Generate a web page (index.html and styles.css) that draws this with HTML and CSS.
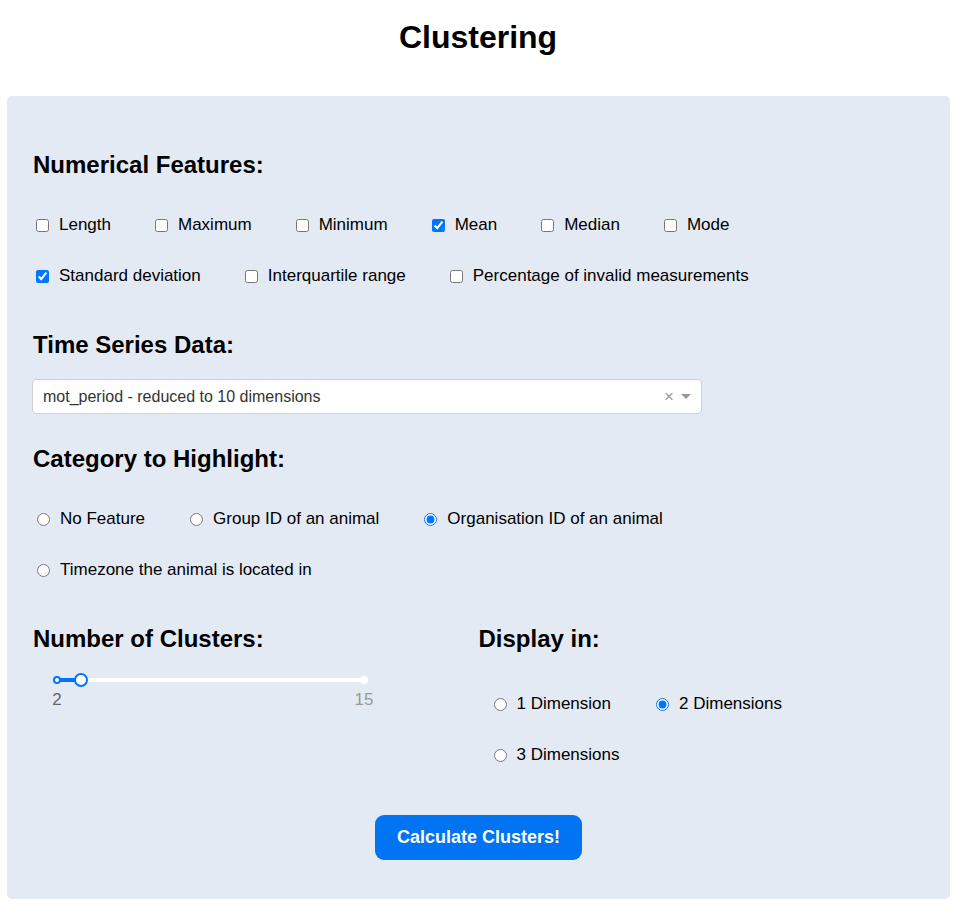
FILE: index.html
```html
<!DOCTYPE html>
<html>
<head>
<meta charset="utf-8">
<title>Clustering</title>
<link rel="stylesheet" href="styles.css">
</head>
<body>
<h1 class="title">Clustering</h1>
<div class="panel">
  <h2 class="heading">Numerical Features:</h2>
  <div class="options checks">
    <label class="opt"><input type="checkbox"><span>Length</span></label>
    <label class="opt"><input type="checkbox"><span>Maximum</span></label>
    <label class="opt"><input type="checkbox"><span>Minimum</span></label>
    <label class="opt"><input type="checkbox" checked><span>Mean</span></label>
    <label class="opt"><input type="checkbox"><span>Median</span></label>
    <label class="opt"><input type="checkbox"><span>Mode</span></label>
    <label class="opt"><input type="checkbox" checked><span>Standard deviation</span></label>
    <label class="opt"><input type="checkbox"><span>Interquartile range</span></label>
    <label class="opt"><input type="checkbox"><span>Percentage of invalid measurements</span></label>
  </div>

  <h2 class="heading sec">Time Series Data:</h2>
  <div class="select">
    <span class="select-value">mot_period - reduced to 10 dimensions</span>
    <span class="select-clear">×</span>
    <span class="select-arrow"></span>
  </div>

  <h2 class="heading sec2">Category to Highlight:</h2>
  <div class="options radios">
    <label class="opt"><input type="radio" name="cat"><span>No Feature</span></label>
    <label class="opt"><input type="radio" name="cat"><span>Group ID of an animal</span></label>
    <label class="opt"><input type="radio" name="cat" checked><span>Organisation ID of an animal</span></label>
    <label class="opt"><input type="radio" name="cat"><span>Timezone the animal is located in</span></label>
  </div>

  <div class="cols">
    <div class="col">
      <h2 class="heading">Number of Clusters:</h2>
      <div class="slider">
        <div class="track">
          <div class="track-active"></div>
          <span class="dot dot-start"></span>
          <span class="dot dot-end"></span>
          <span class="handle"></span>
          <span class="mark mark-active">2</span>
          <span class="mark mark-end">15</span>
        </div>
      </div>
    </div>
    <div class="col">
      <h2 class="heading">Display in:</h2>
      <div class="options radios dims">
        <label class="opt"><input type="radio" name="dim"><span>1 Dimension</span></label>
        <label class="opt"><input type="radio" name="dim" checked><span>2 Dimensions</span></label>
        <label class="opt"><input type="radio" name="dim"><span>3 Dimensions</span></label>
      </div>
    </div>
  </div>

  <div class="actions">
    <button class="btn">Calculate Clusters!</button>
  </div>
</div>
</body>
</html>
```
FILE: styles.css
```css
html, body {
  margin: 0;
  padding: 0;
  background: #ffffff;
  font-family: "Liberation Sans", Arial, sans-serif;
  color: #000;
}

.title {
  margin: 19px 0 0;
  font-size: 32px;
  line-height: 37px;
  font-weight: bold;
  text-align: center;
}

.panel {
  margin: 40px 6px 0 7px;
  padding: 55px 26px 39px;
  background: #e4eaf4;
  border-radius: 5px;
  height: 803px;
  box-sizing: border-box;
}

.heading {
  margin: 0;
  font-size: 24px;
  line-height: 28px;
  font-weight: bold;
}

.sec { margin-top: 45px; }
.sec2 { margin-top: 31px; }

.options {
  display: flex;
  flex-wrap: wrap;
  column-gap: 41px;
  row-gap: 31px;
  margin-top: 36px;
}

.radios { margin-top: 36px; }

.opt {
  display: inline-flex;
  align-items: center;
  gap: 10px;
  font-size: 17px;
  line-height: 20px;
}

.opt input {
  margin: 0 0 0 3px;
  width: 13px;
  height: 13px;
}

.radios .opt input {
  margin-left: 4px;
}

.select {
  margin: 20px 0 0 -1px;
  width: 670px;
  height: 35px;
  box-sizing: border-box;
  background: #fff;
  border: 1px solid #d0d0d0;
  border-radius: 4px;
  display: flex;
  align-items: center;
  padding: 0 10px;
  font-size: 16px;
  color: #333;
}

.select-value { flex: 1; }

.select-clear {
  color: #999;
  font-size: 17px;
  margin-right: 7px;
  line-height: 1;
}

.select-arrow {
  width: 0;
  height: 0;
  border-left: 5px solid transparent;
  border-right: 5px solid transparent;
  border-top: 5px solid #999;
}

.cols {
  display: grid;
  grid-template-columns: 1fr 1fr;
  margin-top: 45px;
  align-items: start;
}

.slider {
  padding-top: 25px;
  padding-left: 24px;
}

.track {
  position: relative;
  width: 307px;
  height: 4px;
  background: #fff;
  border-radius: 2px;
}

.track-active {
  width: 24px;
  height: 4px;
  background: #0075f6;
}

.dot {
  position: absolute;
  top: -2px;
  width: 8px;
  height: 8px;
  box-sizing: border-box;
  border-radius: 50%;
  background: #fff;
  transform: translateX(-50%);
}

.dot-start { left: 0; border: 2px solid #0075f6; }
.dot-end { left: 307px; }

.handle {
  position: absolute;
  left: 24px;
  top: -5px;
  width: 14px;
  height: 14px;
  box-sizing: border-box;
  border: 2px solid #0075f6;
  border-radius: 50%;
  background: #fff;
  transform: translateX(-50%);
}

.mark {
  position: absolute;
  top: 12px;
  font-size: 17px;
  line-height: 20px;
  color: #999;
  transform: translateX(-50%);
}

.mark-active { left: 0; color: #666; }
.mark-end { left: 307px; }

.dims {
  margin-top: 41px;
  padding-left: 11px;
  column-gap: 41px;
  max-width: 360px;
}

.actions {
  display: flex;
  justify-content: center;
  margin-top: 50px;
}

.btn {
  width: 207px;
  height: 45px;
  border: none;
  border-radius: 9px;
  background: #0074f3;
  color: #fff;
  font-family: "Liberation Sans", Arial, sans-serif;
  font-size: 18px;
  font-weight: bold;
  cursor: pointer;
}
```
